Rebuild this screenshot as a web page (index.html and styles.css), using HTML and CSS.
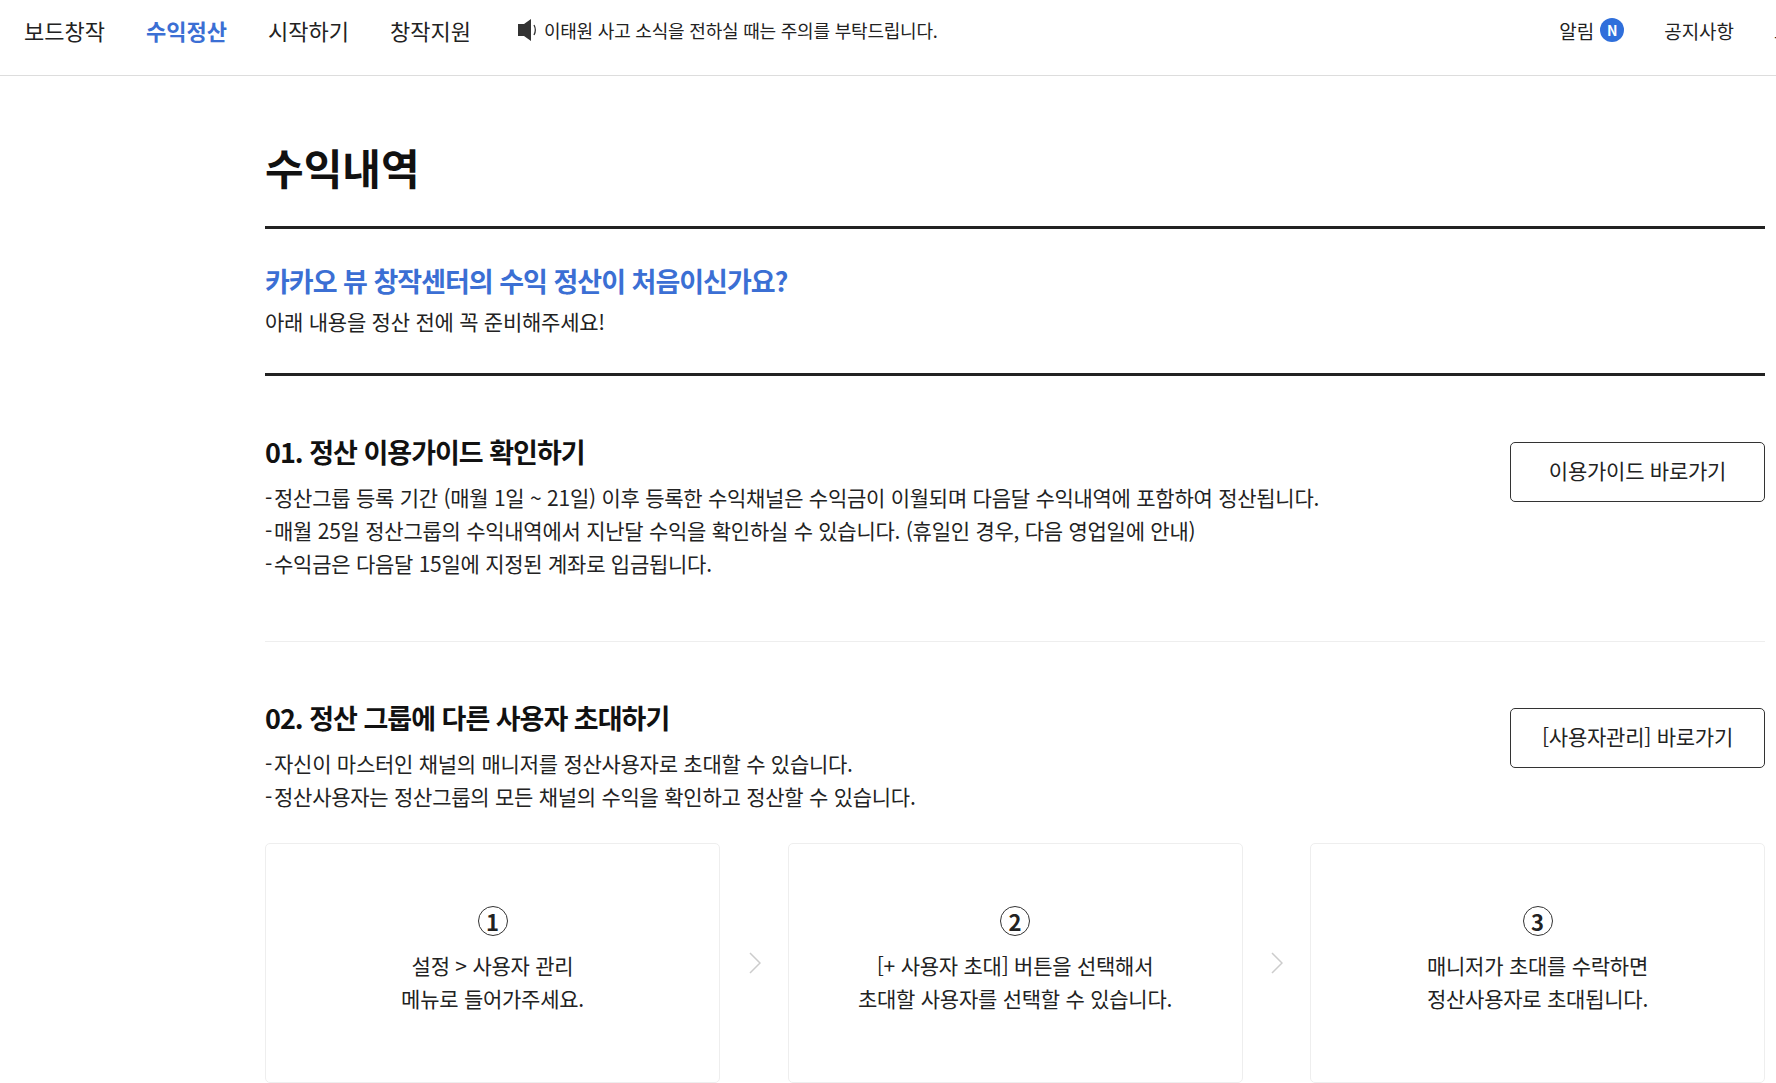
FILE: index.html
```html
<!DOCTYPE html>
<html lang="ko">
<head>
    <meta charset="UTF-8"/>
    <title>수익내역</title>
    <link rel="stylesheet" href="styles.css">
</head>
<body>
    <header class="top-bar">
        <nav class="gnb">
            <a href="#">보드창작</a>
            <a href="#" class="active">수익정산</a>
            <a href="#">시작하기</a>
            <a href="#">창작지원</a>
        </nav>
        <div class="notice">
            <svg class="speaker" width="20" height="22" viewBox="0 0 20 22">
                <path d="M0 5h6l7-5v22l-7-5H0z" fill="#333"/>
                <path d="M16 6c1.600 3 1.600 7 0 10" fill="none" stroke="#333" stroke-width="1.300"/>
            </svg>
            <span>이태원 사고 소식을 전하실 때는 주의를 부탁드립니다.</span>
        </div>
        <div class="util">
            <a href="#" class="alarm">알림 <span class="badge">N</span></a>
            <a href="#">공지사항</a>
            <a href="#">로그아웃</a>
        </div>
    </header>

    <main class="content">
        <h1 class="page-title">수익내역</h1>

        <div class="intro">
            <h2>카카오 뷰 창작센터의 수익 정산이 처음이신가요?</h2>
            <p>아래 내용을 정산 전에 꼭 준비해주세요!</p>
        </div>

        <section class="guide first">
            <div class="guide-text">
                <h3>01. 정산 이용가이드 확인하기</h3>
                <p><span class="dash">-</span>정산그룹 등록 기간 (매월 1일 ~ 21일) 이후 등록한 수익채널은 수익금이 이월되며 다음달 수익내역에 포함하여 정산됩니다.</p>
                <p><span class="dash">-</span>매월 25일 정산그룹의 수익내역에서 지난달 수익을 확인하실 수 있습니다. (휴일인 경우, 다음 영업일에 안내)</p>
                <p><span class="dash">-</span>수익금은 다음달 15일에 지정된 계좌로 입금됩니다.</p>
            </div>
            <a href="#" class="link-btn">이용가이드 바로가기</a>
        </section>

        <section class="guide second">
            <div class="guide-text">
                <h3>02. 정산 그룹에 다른 사용자 초대하기</h3>
                <p><span class="dash">-</span>자신이 마스터인 채널의 매니저를 정산사용자로 초대할 수 있습니다.</p>
                <p><span class="dash">-</span>정산사용자는 정산그룹의 모든 채널의 수익을 확인하고 정산할 수 있습니다.</p>
            </div>
            <a href="#" class="link-btn">[사용자관리] 바로가기</a>
        </section>

        <div class="steps">
            <div class="step">
                <span class="num">1</span>
                <p>설정 &gt; 사용자 관리<br>메뉴로 들어가주세요.</p>
            </div>
            <svg class="arrow" width="14" height="24" viewBox="0 0 14 24"><path d="M3 2l10 10L3 22" fill="none" stroke="#ccc" stroke-width="1.500"/></svg>
            <div class="step">
                <span class="num">2</span>
                <p>[+ 사용자 초대] 버튼을 선택해서<br>초대할 사용자를 선택할 수 있습니다.</p>
            </div>
            <svg class="arrow" width="14" height="24" viewBox="0 0 14 24"><path d="M3 2l10 10L3 22" fill="none" stroke="#ccc" stroke-width="1.500"/></svg>
            <div class="step">
                <span class="num">3</span>
                <p>매니저가 초대를 수락하면<br>정산사용자로 초대됩니다.</p>
            </div>
        </div>
    </main>
</body>
</html>
```

FILE: styles.css
```css
html, body {
    margin: 0;
    padding: 0;
    height: 1083px;
    overflow: hidden;
}

body {
    font-family: "Noto Sans CJK KR", "Noto Sans", sans-serif;
    color: #222;
    background-color: #fff;
}

a {
    color: inherit;
    text-decoration: none;
}

p, h1, h2, h3 {
    margin: 0;
}

.top-bar {
    display: flex;
    align-items: center;
    height: 60px;
    padding: 0 0 15px 24px;
    border-bottom: 1px solid #ddd;
    white-space: nowrap;
}

.gnb {
    display: flex;
    gap: 41px;
    font-size: 22px;
}

.gnb .active {
    color: #3b6fd4;
    font-weight: 700;
}

.notice {
    display: flex;
    align-items: center;
    gap: 6px;
    margin-left: 47px;
    font-size: 18px;
    letter-spacing: -0.2px;
}

.util {
    display: flex;
    gap: 40px;
    margin-left: auto;
    margin-right: -68px;
    font-size: 19px;
}

.alarm {
    display: flex;
    align-items: center;
    gap: 6px;
}

.badge {
    display: flex;
    align-items: center;
    justify-content: center;
    width: 24px;
    height: 24px;
    border-radius: 50%;
    background-color: #2f6fdb;
    color: #fff;
    font-size: 14px;
    font-weight: 700;
}

.content {
    width: 1500px;
    margin-left: 265px;
}

.page-title {
    height: 153px;
    box-sizing: border-box;
    padding-top: 62px;
    border-bottom: 3px solid #222;
    font-size: 42px;
    line-height: 58px;
    color: #111;
}

.intro {
    height: 147px;
    box-sizing: border-box;
    padding-top: 34px;
    border-bottom: 3px solid #222;
}

.intro h2 {
    font-size: 27px;
    line-height: 36px;
    letter-spacing: -1px;
    color: #3b6fd4;
}

.intro p {
    margin-top: 7px;
    font-size: 21px;
    line-height: 30px;
    letter-spacing: -0.25px;
}

.guide {
    display: flex;
    justify-content: space-between;
    align-items: flex-start;
    padding-top: 58px;
}

.guide.first {
    height: 266px;
    box-sizing: border-box;
    border-bottom: 1px solid #eee;
}

.guide h3 {
    margin-bottom: 11px;
    font-size: 27px;
    line-height: 36px;
    letter-spacing: -1px;
    color: #111;
}

.guide p {
    font-size: 21px;
    line-height: 33px;
    letter-spacing: -0.26px;
}

.dash {
    margin-right: 2px;
}

.link-btn {
    display: flex;
    align-items: center;
    justify-content: center;
    width: 255px;
    height: 60px;
    padding-bottom: 5px;
    margin-top: 8px;
    box-sizing: border-box;
    border: 1px solid #333;
    border-radius: 5px;
    font-size: 21px;
    letter-spacing: -0.25px;
}

.steps {
    display: flex;
    justify-content: space-between;
    align-items: center;
    margin-top: 30px;
}

.step {
    display: flex;
    flex-direction: column;
    align-items: center;
    justify-content: center;
    width: 455px;
    height: 240px;
    padding-bottom: 6px;
    box-sizing: border-box;
    border: 1px solid #eee;
    border-radius: 5px;
    text-align: center;
}

.num {
    display: flex;
    align-items: center;
    justify-content: center;
    width: 28px;
    height: 28px;
    border: 1px solid #333;
    border-radius: 50%;
    font-size: 22px;
    font-weight: 700;
    line-height: 1;
}

.step p {
    margin-top: 13px;
    font-size: 21px;
    line-height: 33px;
    letter-spacing: -0.25px;
}
```
